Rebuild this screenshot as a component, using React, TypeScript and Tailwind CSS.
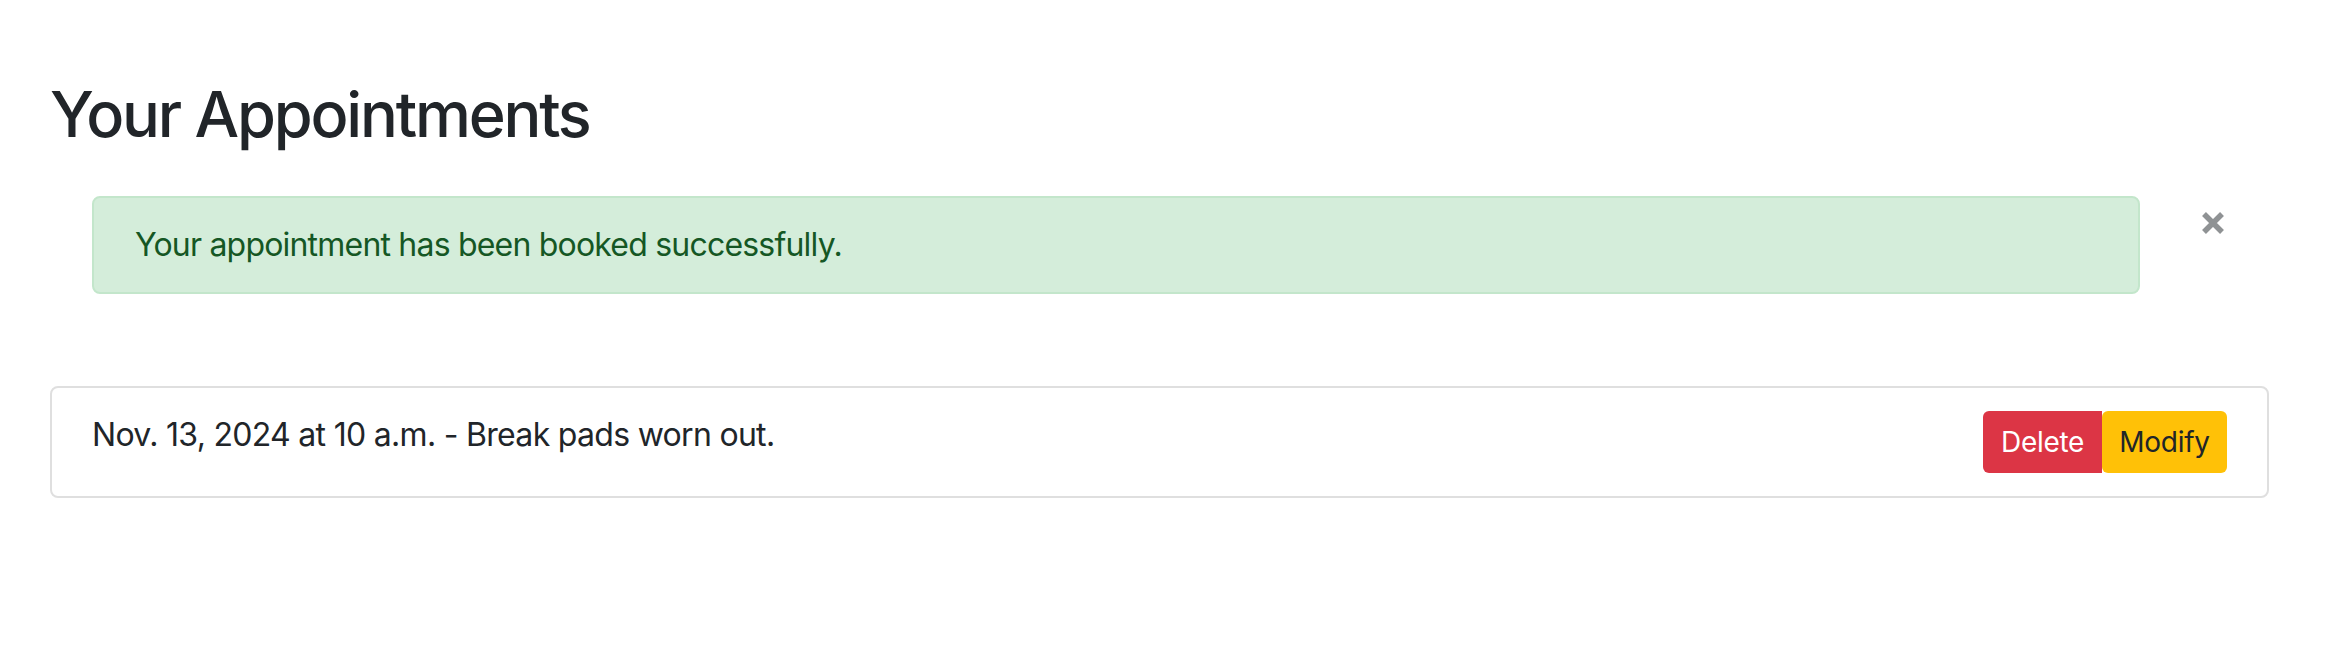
import { Fragment } from 'react'

type Appointment = {
  id: number
  when: string
  description: string
}

const appointments: Appointment[] = [
  { id: 1, when: 'Nov. 13, 2024 at 10 a.m.', description: 'Break pads worn out.' },
]

function CloseIcon() {
  return (
    <svg width="26" height="26" viewBox="0 0 26 26" aria-hidden="true">
      <path d="M4 4 L22 22 M22 4 L4 22" stroke="#8f9294" strokeWidth="5.5" strokeLinecap="butt" />
    </svg>
  )
}

export default function App() {
  return (
    <div
      className="min-h-[666px] bg-white text-[#212529] pl-[50px] pr-[61px] pt-[77px]"
      style={{ fontFamily: 'Inter, "Noto Sans", sans-serif' }}
    >
      <h2 className="text-[63px] leading-[1.2] font-[550] tracking-[-2.2px]">Your Appointments</h2>

      {/* flash message */}
      <div className="flex items-start mt-[43px]">
        <div className="ml-[42px] w-[2048px] rounded-[8px] border-2 border-[#c3e6cb] bg-[#d4edda] px-[41px] py-[23px] text-[32px] leading-[48px] tracking-[-0.8px] text-[#155724]">
          Your appointment has been booked successfully.
        </div>
        <button className="ml-[60px] mt-[14px] flex h-[26px] w-[26px] items-center justify-center">
          <CloseIcon />
        </button>
      </div>

      <ul className="mt-[92px]">
        {appointments.map((a) => (
          <Fragment key={a.id}>
            <li className="flex justify-between rounded-[8px] border-2 border-[#dfdfdf] px-[40px] py-[23px] text-[32px] leading-[48px]">
              <span className="tracking-[-0.7px]">
                {a.when} - {a.description}
              </span>
              <div className="flex">
                <button className="h-[62px] w-[119px] rounded-l-[6px] bg-[#dc3545] text-[28px] leading-[42px] tracking-[-0.3px] text-white">
                  Delete
                </button>
                <button className="h-[62px] w-[125px] rounded-[6px] bg-[#ffc107] text-[28px] leading-[42px] tracking-[-0.3px] text-[#212529]">
                  Modify
                </button>
              </div>
            </li>
          </Fragment>
        ))}
      </ul>
    </div>
  )
}
